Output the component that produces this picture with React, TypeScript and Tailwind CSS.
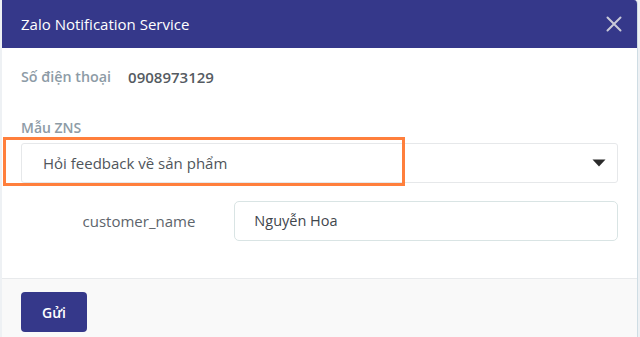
import React from "react";

export default function App() {
  return (
    <div
      className="relative w-[640px] h-[337px] overflow-hidden bg-[#eef1f4] flex"
      style={{ fontFamily: '"Open Sans", "Noto Sans", sans-serif' }}
    >
      <div className="ml-[2px] w-[636px] h-[337px] flex flex-col rounded-tr-[4px] overflow-hidden border-r border-[#cfdde4] bg-white">
        {/* Header */}
        <div className="h-[48px] shrink-0 bg-[#35388a] flex items-center justify-between pl-[19px] pr-[14px]">
          <span className="text-white text-[15px] leading-none">Zalo Notification Service</span>
          <svg width="16" height="16" viewBox="0 0 16 16" className="mr-[1px]">
            <path d="M1.5 1.5 L14.5 14.5 M14.5 1.5 L1.5 14.5" stroke="#c9cad8" strokeWidth="2" strokeLinecap="round" />
          </svg>
        </div>
        {/* Body */}
        <div className="flex-1 px-[19px] pt-[19px]">
          <div className="flex items-center h-[20px] font-semibold">
            <span className="text-[14.3px] text-[#8d9ba6]">Số điện thoại</span>
            <span className="ml-[17px] text-[15px] text-[#555b62]">0908973129</span>
          </div>
          <div className="mt-[30px] h-[20px] flex items-center text-[14px] font-semibold text-[#8d9ba6]">Mẫu ZNS</div>
          <div className="mt-[6px] h-[40px] w-[597px] rounded-[3px] border border-[#e6e8ea] flex items-center justify-between pl-[21px] pr-[11px]">
            <span className="text-[15px] text-[#4f555b]">Hỏi feedback về sản phẩm</span>
            <svg width="14" height="8" viewBox="0 0 14 8">
              <path d="M0.5 0.5 L13.5 0.5 L7 7.5 Z" fill="#2b2b2b" />
            </svg>
          </div>
          <div className="mt-[18px] flex items-center">
            <div className="w-[175px] text-right text-[15px] text-[#5d646b]">customer_name</div>
            <div className="ml-[39px] h-[40px] w-[385px] rounded-[5px] border border-[#d9e4e4] flex items-center pl-[19px] text-[14.5px] text-[#3f464d]">
              Nguyễn Hoa
            </div>
          </div>
        </div>
        {/* Footer */}
        <div className="h-[59px] shrink-0 bg-[#f9f9f9] border-t border-[#e8eaec] pl-[19px] pt-[13px]">
          <button className="w-[66px] h-[40px] rounded-[4px] bg-[#35388a] text-white text-[14px] font-semibold">Gửi</button>
        </div>
      </div>
      {/* Orange annotation overlay */}
      <div className="absolute left-[3px] top-[137px] w-[402px] h-[49px] border-[3px] border-[#ff7f3c] pointer-events-none" />
    </div>
  );
}
